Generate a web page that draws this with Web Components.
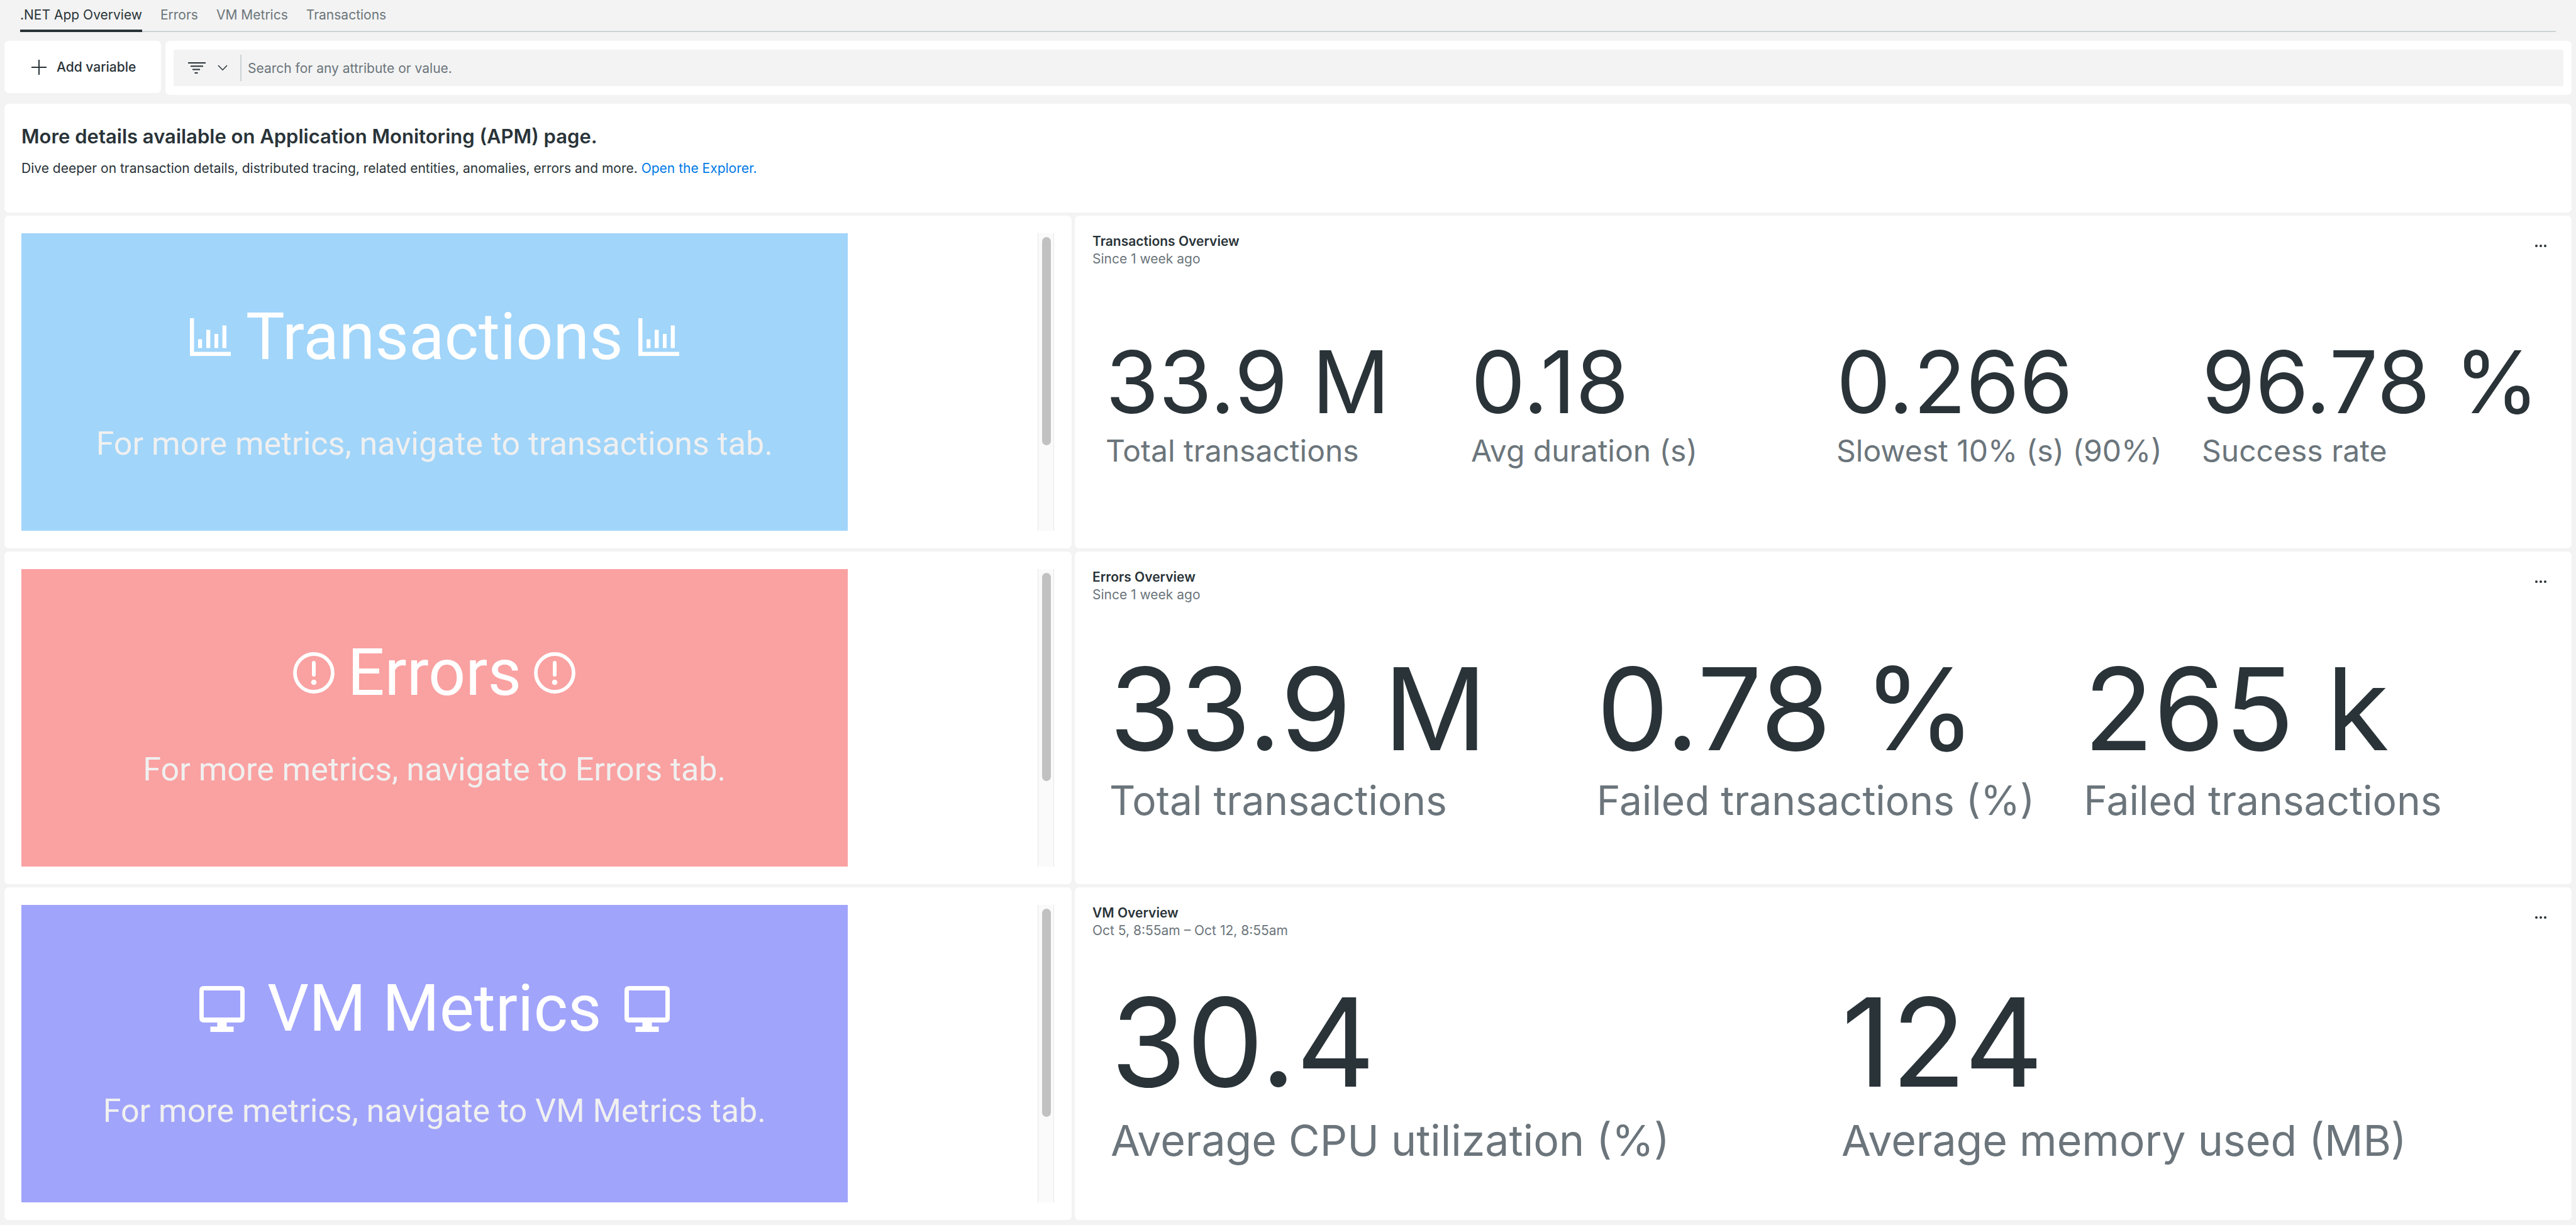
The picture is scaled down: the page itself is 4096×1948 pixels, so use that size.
<!DOCTYPE html>
<html lang="en">
<head>
<meta charset="utf-8">
<title>.NET App Overview</title>
<style>
  html, body { margin: 0; min-height: 100%; }
  body {
    background: #f3f3f3;
    color: #293338;
    font-family: Inter, "Liberation Sans", sans-serif;
    font-size: 21px;
    line-height: 28px;
    --ink: #293338;
    --muted: #6b757b;
    --line: #cdd3d5;
    --surface: #ffffff;
    --well: #f3f3f3;
    --radius: 7px;
  }
</style>
</head>
<body>
<app-dashboard></app-dashboard>

<script>
const define = (name, html, setup) => {
  const template = document.createElement('template');
  template.innerHTML = html;
  customElements.define(name, class extends HTMLElement {
    constructor() {
      super();
      this.attachShadow({ mode: 'open' }).append(template.content.cloneNode(true));
    }
    connectedCallback() { if (setup) setup(this, this.shadowRoot); }
  });
};

const icons = {
  plus: '<svg viewBox="0 0 24 24"><path d="M12 0V24M0 12H24" stroke="currentColor" stroke-width="2" fill="none"/></svg>',
  filter: '<svg viewBox="0 0 28 18"><path d="M0 1H28M4 6.3H24M7 11.6H19M10.500 17H15.500" stroke="currentColor" stroke-width="2" fill="none"/></svg>',
  chevron: '<svg viewBox="0 0 16 10"><path d="M1 1L8 8.200L15 1" stroke="currentColor" stroke-width="1.500" fill="none"/></svg>',
  dots: '<svg viewBox="0 0 18 4"><g fill="currentColor"><circle cx="2" cy="2" r="2"/><circle cx="9" cy="2" r="2"/><circle cx="16" cy="2" r="2"/></g></svg>',
  chart: '<svg viewBox="0 0 65 60"><path d="M0 0H6.500V53.500H65V60H0ZM13 33.500H19.300V47.500H13ZM26 18.400H32.400V47.500H26ZM39 25H45V47.500H39ZM51.600 11.500H58V47.500H51.600Z" fill="currentColor"/></svg>',
  alert: '<svg viewBox="0 0 66 66"><circle cx="33" cy="33" r="30" stroke="currentColor" stroke-width="5.800" fill="none"/><rect x="30" y="14" width="6" height="25" rx="3" fill="currentColor"/><circle cx="33" cy="48" r="4.300" fill="currentColor"/></svg>',
  monitor: '<svg viewBox="0 0 72 73"><path d="M7 0H65Q72 0 72 7V51Q72 58 65 58H43.500V64.500H54.500V73H17.500V64.500H28.500V58H7Q0 58 0 51V7Q0 0 7 0ZM7 7V50H65V7Z" fill="currentColor" fill-rule="evenodd"/></svg>'
};

class UiIcon extends HTMLElement {
  static observedAttributes = ['name'];
  constructor() {
    super();
    this.attachShadow({ mode: 'open' });
  }
  attributeChangedCallback() {
    this.shadowRoot.innerHTML = `
      <style>
        :host { display: block; flex: none; width: var(--w, 24px); height: var(--h, 24px); }
        svg { display: block; width: 100%; height: 100%; }
      </style>${icons[this.getAttribute('name')] || ''}`;
  }
}
customElements.define('ui-icon', UiIcon);

define('tab-bar', `
  <style>
    :host { display: block; padding: 0 32px; }
    nav { display: flex; gap: 29px; height: 49px; border-bottom: 2px solid var(--line); }
    ::slotted(a) {
      box-sizing: border-box; height: 51px; padding-top: 8px; line-height: 32px;
      color: var(--muted); text-decoration: none; white-space: nowrap;
    }
    ::slotted(a[aria-current]) { color: var(--ink); border-bottom: 4px solid var(--ink); }
  </style>
  <nav aria-label="Dashboard pages"><slot></slot></nav>`);

define('add-variable', `
  <style>
    :host { display: block; }
    button {
      display: flex; align-items: center; gap: 16px; height: 83px; width: 249px;
      padding: 0 0 0 43px; border: 0; border-radius: var(--radius);
      background: var(--surface); color: var(--ink); font: inherit; font-weight: 500; white-space: nowrap;
    }
  </style>
  <button type="button"><ui-icon name="plus"></ui-icon><slot></slot></button>`);

define('filter-bar', `
  <style>
    :host { display: block; background: var(--surface); border-radius: var(--radius); padding: 14px 13px; }
    .well { display: flex; align-items: center; height: 58px; background: var(--well); border-radius: 3px; }
    button {
      display: flex; align-items: center; gap: 19px; height: 42px; padding: 0 20px 0 23px;
      border: 0; border-right: 2px solid var(--line); background: none; color: var(--ink);
    }
    .lines { --w: 28px; --h: 18px; }
    .caret { --w: 16px; --h: 10px; }
    input {
      flex: 1; height: 58px; border: 0; padding: 0 10px; background: none; outline: 0;
      font: inherit; color: var(--ink);
    }
    input::placeholder { color: var(--muted); opacity: 1; }
  </style>
  <div class="well">
    <button type="button" aria-label="Filter mode"><ui-icon class="lines" name="filter"></ui-icon><ui-icon class="caret" name="chevron"></ui-icon></button>
    <input type="text" aria-label="Search for any attribute or value." placeholder="Search for any attribute or value.">
  </div>`);

define('note-card', `
  <style>
    :host { display: block; box-sizing: border-box; min-height: 173px; padding: 32px 27px; background: var(--surface); border-radius: var(--radius); }
    h2 { margin: 0 0 17px; font-size: 31px; line-height: 40px; font-weight: 600; }
    p { margin: 0; }
    ::slotted(a) { color: #0079e6; text-decoration: none; }
  </style>
  <h2><slot name="title"></slot></h2>
  <p><slot></slot></p>`);

define('banner-card', `
  <style>
    :host {
      display: flex; justify-content: space-between; box-sizing: border-box; min-height: 529px;
      padding: 28px 28px 28px 27px; background: var(--surface); border-radius: var(--radius);
    }
    .banner {
      box-sizing: border-box; width: 80%; padding-top: 103px; background: var(--tone); color: #fff;
      font-family: Roboto, "Liberation Sans", sans-serif; text-align: center;
    }
    h2 {
      display: flex; justify-content: center; align-items: center; gap: var(--gap);
      margin: 0; font-size: 104px; line-height: 124px; font-weight: 400;
    }
    p { margin: var(--drop) 0 0; color: #f0f0f0; font-size: 52px; line-height: 64px; }
    .track {
      box-sizing: border-box; width: 26px; padding: 6px 4px 0 6px; background: #fafafa;
      border: solid #e8e8e8; border-width: 0 1px;
    }
    .thumb { height: 331px; border-radius: 7px; background: #c1c1c1; }
  </style>
  <section class="banner">
    <h2><ui-icon></ui-icon><span><slot name="title"></slot></span><ui-icon></ui-icon></h2>
    <p><slot></slot></p>
  </section>
  <div class="track"><div class="thumb"></div></div>`,
  (el, root) => root.querySelectorAll('ui-icon').forEach(i => i.setAttribute('name', el.getAttribute('icon'))));

define('billboard-card', `
  <style>
    :host {
      display: flex; flex-direction: column; box-sizing: border-box; min-height: 529px;
      padding: 27px 28px 28px; background: var(--surface); border-radius: var(--radius);
    }
    header { display: flex; justify-content: space-between; height: 87px; }
    h3 { margin: 0; font-size: 21px; line-height: 28px; font-weight: 600; }
    p { margin: 0; color: var(--muted); }
    button { width: 42px; height: 42px; padding: 0; border: 0; background: none; color: var(--ink); display: grid; place-items: center; }
    ui-icon { --w: 18px; --h: 4px; }
    .values { flex: 1; display: flex; align-items: center; }
  </style>
  <header>
    <div><h3><slot name="title"></slot></h3><p><slot name="since"></slot></p></div>
    <button type="button" aria-label="More options"><ui-icon name="dots"></ui-icon></button>
  </header>
  <div class="values"><slot></slot></div>`);

define('big-value', `
  <style>
    :host { display: block; flex: 1 1 0; min-width: 0; box-sizing: border-box; white-space: nowrap; padding: 0 0 var(--foot) var(--inset); }
    .value { font-size: var(--value-size); line-height: var(--value-line); }
    .label { font-size: var(--label-size); line-height: var(--label-line); color: var(--muted); }
  </style>
  <div class="value"><slot></slot></div>
  <div class="label"><slot name="label"></slot></div>`);

define('app-dashboard', `
  <style>
    :host { display: block; }
    .tools { display: grid; grid-template-columns: auto 1fr; gap: 7px; align-items: start; padding: 14px 7px; }
    main { display: grid; grid-template-columns: 1697fr 2380fr; gap: 5px; padding: 0 7px 8px; }
    note-card { grid-column: 1 / -1; }
    .blue { --tone: #a1d5fa; --gap: 24px; --drop: 76px; --w: 65px; --h: 60px; }
    .red { --tone: #faa1a1; --gap: 20px; --drop: 60px; --w: 66px; --h: 66px; }
    .violet { --tone: #a1a4fb; --gap: 36px; --drop: 69px; --w: 72px; --h: 73px; }
    .four { --value-size: 137px; --value-line: 160px; --label-size: 48px; --label-line: 60px; --inset: 21px; --foot: 27px; }
    .three { --value-size: 182px; --value-line: 212px; --label-size: 64px; --label-line: 80px; --inset: 27px; --foot: 36px; }
    .two { --value-size: 195px; --value-line: 228px; --label-size: 68px; --label-line: 84px; --inset: 29px; --foot: 39px; }
  </style>
  <tab-bar>
    <a href="#overview" aria-current="page">.NET App Overview</a>
    <a href="#errors">Errors</a>
    <a href="#vm">VM Metrics</a>
    <a href="#transactions">Transactions</a>
  </tab-bar>
  <div class="tools">
    <add-variable>Add variable</add-variable>
    <filter-bar></filter-bar>
  </div>
  <main>
    <note-card>
      <span slot="title">More details available on Application Monitoring (APM) page.</span>
      Dive deeper on transaction details, distributed tracing, related entities, anomalies, errors and more. <a href="#explorer">Open the Explorer.</a>
    </note-card>

    <banner-card class="blue" icon="chart"><span slot="title">Transactions</span>For more metrics, navigate to transactions tab.</banner-card>
    <billboard-card class="four">
      <span slot="title">Transactions Overview</span><span slot="since">Since 1 week ago</span>
      <big-value>33.9 M<span slot="label">Total transactions</span></big-value>
      <big-value>0.18<span slot="label">Avg duration (s)</span></big-value>
      <big-value>0.266<span slot="label">Slowest 10% (s) (90%)</span></big-value>
      <big-value>96.78 %<span slot="label">Success rate</span></big-value>
    </billboard-card>

    <banner-card class="red" icon="alert"><span slot="title">Errors</span>For more metrics, navigate to Errors tab.</banner-card>
    <billboard-card class="three">
      <span slot="title">Errors Overview</span><span slot="since">Since 1 week ago</span>
      <big-value>33.9 M<span slot="label">Total transactions</span></big-value>
      <big-value>0.78 %<span slot="label">Failed transactions (%)</span></big-value>
      <big-value>265 k<span slot="label">Failed transactions</span></big-value>
    </billboard-card>

    <banner-card class="violet" icon="monitor"><span slot="title">VM Metrics</span>For more metrics, navigate to VM Metrics tab.</banner-card>
    <billboard-card class="two">
      <span slot="title">VM Overview</span><span slot="since">Oct 5, 8:55am – Oct 12, 8:55am</span>
      <big-value>30.4<span slot="label">Average CPU utilization (%)</span></big-value>
      <big-value>124<span slot="label">Average memory used (MB)</span></big-value>
    </billboard-card>
  </main>`);
</script>
</body>
</html>
